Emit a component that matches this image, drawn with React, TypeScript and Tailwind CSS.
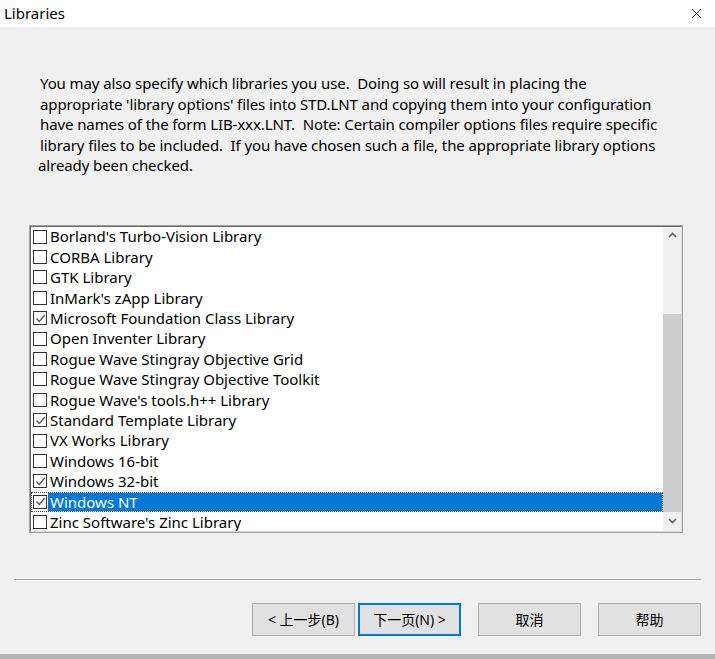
import { X } from 'lucide-react';

interface LibItem {
    name: string;
    checked: boolean;
}

const libraries: LibItem[] = [
    { name: "Borland's Turbo-Vision Library", checked: false },
    { name: 'CORBA Library', checked: false },
    { name: 'GTK Library', checked: false },
    { name: "InMark's zApp Library", checked: false },
    { name: 'Microsoft Foundation Class Library', checked: true },
    { name: 'Open Inventer Library', checked: false },
    { name: 'Rogue Wave Stingray Objective Grid', checked: false },
    { name: 'Rogue Wave Stingray Objective Toolkit', checked: false },
    { name: "Rogue Wave's tools.h++ Library", checked: false },
    { name: 'Standard Template Library', checked: true },
    { name: 'VX Works Library', checked: false },
    { name: 'Windows 16-bit', checked: false },
    { name: 'Windows 32-bit', checked: true },
    { name: 'Windows NT', checked: true },
    { name: "Zinc Software's Zinc Library", checked: false },
];

const intro = [
    'You may also specify which libraries you use.  Doing so will result in placing the',
    "appropriate 'library options' files into STD.LNT and copying them into your configuration",
    'have names of the form LIB-xxx.LNT.  Note: Certain compiler options files require specific',
    'library files to be included.  If you have chosen such a file, the appropriate library options',
];

const CheckBox = ({ checked }: { checked: boolean }) => (
    <span className="flex h-[14px] w-[14px] shrink-0 items-center justify-center border border-[#333333] bg-white">
        {checked && (
            <svg width="11" height="11" viewBox="0 0 11 11">
                <path d="M1.5 5.5 L4.3 8.5 L9.8 2" fill="none" stroke="#555555" strokeWidth="1.3" />
            </svg>
        )}
    </span>
);

const Chevron = ({ up }: { up: boolean }) => (
    <svg width="9" height="6" viewBox="0 0 9 6">
        <path d={up ? 'M1 5 L4.5 1.5 L8 5' : 'M1 1 L4.5 4.5 L8 1'} fill="none" stroke="#606060" strokeWidth="1.6" />
    </svg>
);

const WizButton = ({ label, focused }: { label: string; focused?: boolean }) => (
    <button
        className={`flex h-[33px] w-[103px] items-center justify-center bg-[#e1e1e1] text-[14px] text-black ${
            focused ? 'border-2 border-[#0078d7]' : 'border border-[#adadad]'
        }`}
    >
        {label}
    </button>
);

export default function App() {
    return (
        <div
            className="flex h-[659px] w-[715px] flex-col bg-[#f0f0f0] text-black"
            style={{ fontFamily: '"Noto Sans", "Noto Sans CJK SC", sans-serif' }}
        >
            {/* 标题栏 */}
            <div className="flex h-[27px] shrink-0 items-center justify-between bg-white pl-[4px] pr-[10px]">
                <span className="text-[15px]">Libraries</span>
                <X className="h-[17px] w-[17px] text-[#222]" strokeWidth={1.2} />
            </div>

            {/* 说明 */}
            <div className="pt-[46px] pl-[40px] text-[15px] leading-[20.5px] tracking-[-0.1px] whitespace-pre">
                {intro.map((line) => (
                    <div key={line}>{line}</div>
                ))}
                <div className="-ml-[2px]">already been checked.</div>
            </div>

            {/* 列表 */}
            <div className="mt-[49px] ml-[29px] flex h-[308px] w-[654px] border border-[#a0a0a0]">
                <div className="flex flex-1 border border-[#696969] border-r-[#d9d9d9] border-b-[#d9d9d9] bg-white">
                    <div className="flex-1 overflow-hidden">
                        {libraries.map((lib) => {
                            const selected = lib.name === 'Windows NT';
                            return (
                                <div
                                    key={lib.name}
                                    className={`flex h-[20.4px] items-center text-[15px] ${
                                        selected ? 'border border-dotted border-[#444]' : 'border border-transparent'
                                    }`}
                                >
                                    <span className="px-[1px]">
                                        <CheckBox checked={lib.checked} />
                                    </span>
                                    <span
                                        className={`flex h-full flex-1 items-center pl-[2px] ${
                                            selected ? 'bg-[#0078d7] text-white' : ''
                                        }`}
                                    >
                                        {lib.name}
                                    </span>
                                </div>
                            );
                        })}
                    </div>

                    {/* 滚动条 */}
                    <div className="flex w-[18px] flex-col bg-[#f0f0f0]">
                        <div className="flex h-[17px] items-center justify-center">
                            <Chevron up />
                        </div>
                        <div className="mt-[70px] flex-1 bg-[#cdcdcd]" />
                        <div className="flex h-[19px] items-center justify-center">
                            <Chevron up={false} />
                        </div>
                    </div>
                </div>
            </div>

            {/* 分隔线 */}
            <div className="mt-[46px] mx-[14px] h-[2px] border-t border-[#a0a0a0] border-b border-b-white" />

            {/* 按钮 */}
            <div className="mt-[22px] flex justify-end pr-[14px]">
                <div className="flex gap-[3px]">
                    <WizButton label="< 上一步(B)" />
                    <WizButton label="下一页(N) >" focused />
                </div>
                <div className="ml-[17px]">
                    <WizButton label="取消" />
                </div>
                <div className="ml-[17px]">
                    <WizButton label="帮助" />
                </div>
            </div>

            <div className="mt-auto h-[5px] bg-[#b4b4b4]" />
        </div>
    );
}
